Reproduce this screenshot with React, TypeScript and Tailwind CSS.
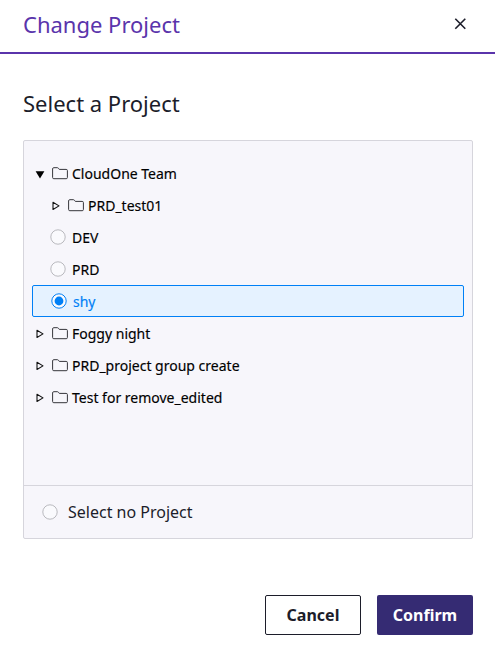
import React from 'react';

function Folder() {
  return (
    <svg className="h-4 w-4 shrink-0" viewBox="0 0 16 16" fill="none" stroke="#35353b" strokeWidth="1">
      <path d="M.6 3.9c0-.8.4-1.2 1.2-1.2h3.6c.5 0 .8.2 1.1.6l.8 1.1h6.9c.8 0 1.2.4 1.2 1.2v6.9c0 .8-.4 1.2-1.2 1.2H1.8c-.8 0-1.2-.4-1.2-1.2z" />
    </svg>
  );
}

function Caret({ open = false }: { open?: boolean }) {
  return (
    <svg className="h-4 w-4 shrink-0" viewBox="0 0 16 16" fill={open ? '#000' : 'none'} stroke={open ? 'none' : '#111'} strokeWidth="1.1" strokeLinejoin="round">
      {open ? <path d="M3.6 6.2h8.8L8 13.4z" /> : <path d="M5 5.3v7.2l6-3.6z" />}
    </svg>
  );
}

function Radio({ checked = false }: { checked?: boolean }) {
  return (
    <svg className="h-4 w-4 shrink-0" viewBox="0 0 16 16">
      <circle cx="8" cy="8" r="7.2" fill="#fafafd" stroke={checked ? '#0080f6' : '#b9b9be'} strokeWidth="1" />
      {checked && <circle cx="8" cy="8" r="4.4" fill="#0080f6" />}
    </svg>
  );
}

function Group({ label, open, nested }: { label: string; open?: boolean; nested?: boolean }) {
  return (
    <div className={`flex h-8 items-center ${nested ? 'pl-4' : ''}`}>
      <Caret open={open} />
      <span className="ml-1 flex"><Folder /></span>
      <span className="ml-1 pt-[2px] leading-5">{label}</span>
    </div>
  );
}

function Project({ label, checked }: { label: string; checked?: boolean }) {
  return (
    <div className={`flex h-8 items-center ${checked ? 'rounded-[2px] border border-[#0080f6] bg-[#e5f2ff] pl-[18px] text-[#0080f6]' : 'pl-[18px]'}`}>
      <Radio checked={checked} />
      <span className="ml-[6px] pt-[2px] leading-5">{label}</span>
    </div>
  );
}

export default function App() {
  return (
    <main className="flex h-[654px] w-[495px] flex-col overflow-hidden bg-white font-['Noto_Sans',sans-serif] text-[#1c1d2a]">
      <header className="flex h-[54px] items-center justify-between border-b-2 border-[#5a34ab] pr-[28px] pl-[23px]">
        <h1 className="pb-1 text-[22px] leading-8 text-[#5a34ab]">Change Project</h1>
        <svg className="mb-[5px] h-[14px] w-[14px]" viewBox="0 0 14 14" stroke="#1c1d2a" strokeWidth="1.6">
          <path d="M2.3 1.8l10 10M12.3 1.8L2.3 11.8" />
        </svg>
      </header>
      <h2 className="mt-[33px] ml-[23px] text-[22px] leading-8">Select a Project</h2>
      <section className="mt-[21px] ml-[23px] flex h-[399px] w-[450px] flex-col rounded-[2px] border border-[#d6d5dc] bg-[#f7f6fb]">
        <div className="flex-1 px-2 pt-4 text-sm text-black [-webkit-text-stroke:0.15px_currentColor]">
          <Group label="CloudOne Team" open />
          <Group label="PRD_test01" nested />
          <Project label="DEV" />
          <Project label="PRD" />
          <Project label="shy" checked />
          <Group label="Foggy night" />
          <Group label="PRD_project group create" />
          <Group label="Test for remove_edited" />
        </div>
        <div className="flex h-[53px] items-center border-t border-[#d6d5dc] pl-[18px]">
          <Radio />
          <span className="ml-[10px] text-base">Select no Project</span>
        </div>
      </section>
      <footer className="mt-14 flex justify-end gap-4 pr-[22px] text-base font-bold">
        <button className="h-10 w-24 rounded-[2px] border border-[#1c1d2a]">Cancel</button>
        <button className="h-10 w-24 rounded-[2px] bg-[#352b73] text-white">Confirm</button>
      </footer>
    </main>
  );
}
